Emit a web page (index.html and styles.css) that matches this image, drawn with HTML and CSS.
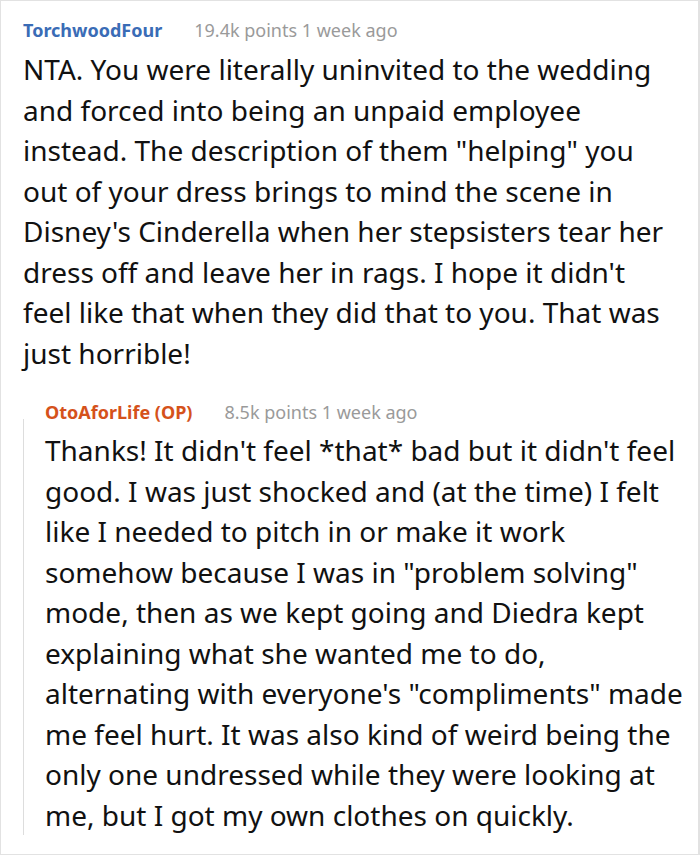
FILE: index.html
```html
<!DOCTYPE html>
<html lang="en">
<head>
<meta charset="utf-8">
<title>Comment</title>
<link rel="stylesheet" href="styles.css">
</head>
<body>
<div class="card">
  <div class="comment">
    <div class="meta">
      <span class="author">TorchwoodFour</span>
      <span class="info">19.4k points 1 week ago</span>
    </div>
    <p class="text">NTA. You were literally uninvited to the wedding<br>and forced into being an unpaid employee<br>instead. The description of them "helping" you<br>out of your dress brings to mind the scene in<br>Disney's Cinderella when her stepsisters tear her<br>dress off and leave her in rags. I hope it didn't<br>feel like that when they did that to you. That was<br>just horrible!</p>
  </div>
  <div class="reply">
    <div class="thread-line"></div>
    <div class="reply-content">
      <div class="meta">
        <span class="author op">OtoAforLife (OP)</span>
        <span class="info">8.5k points 1 week ago</span>
      </div>
      <p class="text">Thanks! It didn't feel *that* bad but it didn't feel good. I was just shocked and (at the time) I felt like I needed to pitch in or make it work somehow because I was in "problem solving" mode, then as we kept going and Diedra kept explaining what she wanted me to do, alternating with everyone's "compliments" made me feel hurt. It was also kind of weird being the only one undressed while they were looking at me, but I got my own clothes on quickly.</p>
    </div>
  </div>
</div>
</body>
</html>
```

FILE: styles.css
```css
html, body {
  margin: 0;
  padding: 0;
  background: #ffffff;
}

.card {
  box-sizing: border-box;
  width: 700px;
  height: 855px;
  border: 1px solid #e2e2e2;
  border-right-width: 2px;
  padding: 15px 8px 0 22px;
  font-family: "Noto Sans", "Open Sans", sans-serif;
  color: #111111;
}

.meta {
  display: flex;
  align-items: center;
  gap: 32px;
  height: 28px;
  font-size: 18px;
  line-height: 28px;
}

.author {
  font-weight: 700;
  color: #3a6cb6;
}

.author.op {
  color: #d5521b;
}

.info {
  color: #9a9a9a;
}

.text {
  margin: 0;
  font-size: 28px;
  line-height: 40.5px;
}

.comment .meta {
  margin-bottom: 5px;
}

.reply {
  display: flex;
  margin-top: 25px;
}

.thread-line {
  flex: none;
  width: 1px;
  margin-top: 21px;
  background: #dddddd;
}

.reply-content {
  flex: 1;
  padding-left: 21px;
}

.reply-content .meta {
  margin-bottom: 4px;
}
```
